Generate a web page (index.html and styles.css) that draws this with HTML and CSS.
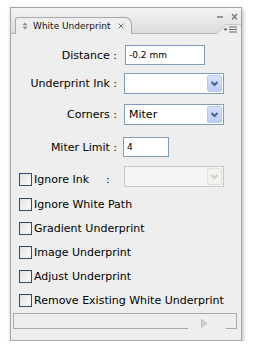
FILE: index.html
```html
<!DOCTYPE html>
<html>
<head>
<meta charset="utf-8">
<link rel="stylesheet" href="styles.css">
</head>
<body>
<div class="panel">
  <div class="header">
    <div class="tab">
      <svg class="grip" width="6" height="8" viewBox="0 0 6 8"><path d="M3 0.5 L5.5 3.2 L0.5 3.2 Z M3 7.5 L5.5 4.8 L0.5 4.8 Z" fill="#8a8a8a"/></svg>
      <span class="tab-title">White Underprint</span>
      <svg class="tab-close" width="6" height="6" viewBox="0 0 6 6"><path d="M0.5 0.5 L5.5 5.5 M5.5 0.5 L0.5 5.5" stroke="#6e6e6e" stroke-width="1"/></svg>
    </div>
    <svg class="win-ctrl" width="28" height="12" viewBox="0 0 28 12"><path d="M2 7 L8 7" stroke="#7a7a7a" stroke-width="1.5"/><path d="M17 4 L22 9.5 M22 4 L17 9.5" stroke="#7a7a7a" stroke-width="1.4"/></svg>
    <svg class="menu-tab" width="24" height="10" viewBox="0 0 24 10"><path d="M0 10 L0 9.5 L9 0.5 L24 0.5 L24 10 Z" fill="#eeeeee"/><path d="M0 9.5 L9 0.5 L24 0.5" fill="none" stroke="#c6c6c6" stroke-width="1"/><path d="M6.5 4.5 L10.5 4.5 L8.5 7 Z" fill="#555"/><path d="M12 3 L20 3 M12 5.5 L20 5.5 M12 8 L20 8" stroke="#666" stroke-width="1"/></svg>
  </div>
  <div class="body">
    <div class="form">
      <div class="row">
        <span class="label">Distance :</span>
        <div class="input distance">-0.2 mm</div>
      </div>
      <div class="row r2">
        <span class="label">Underprint Ink :</span>
        <div class="select">
          <span class="select-text"></span>
          <span class="arrow"><svg width="13" height="15" viewBox="0 0 13 15"><path d="M3.5 6 L6.5 9 L9.5 6" fill="none" stroke="#4d6185" stroke-width="2"/></svg></span>
        </div>
      </div>
      <div class="row r3">
        <span class="label">Corners :</span>
        <div class="select">
          <span class="select-text">Miter</span>
          <span class="arrow"><svg width="13" height="15" viewBox="0 0 13 15"><path d="M3.5 6 L6.5 9 L9.5 6" fill="none" stroke="#4d6185" stroke-width="2"/></svg></span>
        </div>
      </div>
      <div class="row r4">
        <span class="label">Miter Limit :</span>
        <div class="input miter">4</div>
      </div>
    </div>
    <div class="checks">
      <div class="check-row first">
        <span class="cb"></span><span class="cb-text">Ignore Ink</span><span class="colon">:</span>
        <div class="select disabled">
          <span class="select-text"></span>
          <span class="arrow"><svg width="13" height="15" viewBox="0 0 13 15"><path d="M3.5 6 L6.5 9 L9.5 6" fill="none" stroke="#cfcfc8" stroke-width="2"/></svg></span>
        </div>
      </div>
      <div class="check-row"><span class="cb"></span><span class="cb-text">Ignore White Path</span></div>
      <div class="check-row"><span class="cb"></span><span class="cb-text">Gradient Underprint</span></div>
      <div class="check-row"><span class="cb"></span><span class="cb-text">Image Underprint</span></div>
      <div class="check-row"><span class="cb"></span><span class="cb-text">Adjust Underprint</span></div>
      <div class="check-row"><span class="cb"></span><span class="cb-text">Remove Existing White Underprint</span></div>
    </div>
    <div class="status">
      <span class="status-gap"></span>
      <svg class="play" width="7" height="9" viewBox="0 0 7 9"><path d="M0.5 0.5 L6 4.5 L0.5 8.5 Z" fill="#d4d4d4" stroke="#bdbdbd" stroke-width="1"/></svg>
    </div>
  </div>
</div>
</body>
</html>
```

FILE: styles.css
```css
html, body {
  margin: 0;
  padding: 0;
  background: #ffffff;
}

body {
  font-family: "DejaVu Sans", Verdana, sans-serif;
  font-size: 11px;
  color: #000;
}

.panel {
  margin: 7px 0 0 10px;
  width: 230px;
  height: 332px;
  border: 1px solid #a6a6a6;
  background: #eeeeee;
  box-shadow: 1px 2px 4px rgba(0, 0, 0, 0.3);
  display: flex;
  flex-direction: column;
}

.header {
  position: relative;
  height: 25px;
  border-bottom: 1px solid #b4b4b4;
  background: linear-gradient(#f4f4f4, #dcdcdc);
  display: flex;
  align-items: flex-end;
  padding-left: 4px;
}

.tab {
  box-sizing: border-box;
  width: 117px;
  height: 17px;
  margin-bottom: -1px;
  background: #eeeeee;
  border: 1px solid #a9a9a9;
  border-bottom: none;
  border-radius: 3px 7px 0 0;
  display: flex;
  align-items: center;
  padding-left: 6px;
}

.grip {
  display: block;
  flex: none;
}

.tab-title {
  font-size: 9px;
  margin-left: 5px;
  color: #111;
  white-space: nowrap;
}

.tab-close {
  display: block;
  margin-left: 8px;
  flex: none;
}

.win-ctrl {
  position: absolute;
  left: 204px;
  top: 2px;
}

.menu-tab {
  position: absolute;
  left: 206px;
  bottom: -1px;
}

.body {
  flex: 1;
  display: flex;
  flex-direction: column;
}

.form {
  padding-top: 11px;
  display: flex;
  flex-direction: column;
}

.row {
  display: flex;
  align-items: center;
}

.r2 { margin-top: 8px; }
.r3 { margin-top: 10px; }
.r4 { margin-top: 12px; }

.label {
  width: 106px;
  text-align: right;
  white-space: nowrap;
}

.input {
  box-sizing: border-box;
  height: 20px;
  border: 1px solid #7f9db9;
  background: #fff;
  margin-left: 7px;
  display: flex;
  align-items: center;
  padding-left: 3px;
  font-size: 9px;
}

.distance {
  width: 80px;
  margin-left: 8px;
}

.miter {
  width: 46px;
  margin-left: 6px;
}

.select {
  box-sizing: border-box;
  width: 100px;
  height: 21px;
  margin-left: 7px;
  border: 1px solid #7f9db9;
  background: #fff;
  display: flex;
  align-items: center;
  padding: 1px;
}

.select-text {
  flex: 1;
  padding-left: 3px;
  font-size: 11px;
}

.arrow {
  box-sizing: border-box;
  width: 15px;
  height: 17px;
  border: 1px solid #b7c9f3;
  border-radius: 2px;
  background: linear-gradient(#d6e2fd, #b9cdf8);
  display: flex;
  align-items: center;
  justify-content: center;
}

.arrow svg {
  display: block;
}

.select.disabled {
  border-color: #c9c9c3;
  background: #f4f4f2;
  margin-left: 14px;
}

.select.disabled .arrow {
  border-color: #e2e2dd;
  background: #f2f2ef;
}

.checks {
  display: flex;
  flex-direction: column;
  padding-left: 8px;
}

.check-row {
  display: flex;
  align-items: center;
  margin-top: 11px;
}

.check-row.first {
  align-items: flex-end;
  margin-top: 9px;
}

.check-row.first .cb {
  margin-bottom: 1px;
}

.check-row.first .cb-text,
.check-row.first .colon {
  margin-bottom: 1px;
}

.cb {
  box-sizing: border-box;
  width: 13px;
  height: 13px;
  border: 1px solid #2a4f72;
  background: linear-gradient(135deg, #e2e2de, #fbfbfa);
  flex: none;
}

.cb-text {
  margin-left: 2px;
  white-space: nowrap;
  line-height: 13px;
}

.colon {
  margin-left: 17px;
  line-height: 13px;
}

.status {
  position: relative;
  box-sizing: border-box;
  height: 16px;
  margin: 6px 4px 0 2px;
  border: 1px solid #a9a9a9;
}

.status-gap {
  position: absolute;
  left: 174px;
  bottom: -1px;
  width: 38px;
  height: 1px;
  background: #eeeeee;
}

.play {
  position: absolute;
  left: 187px;
  top: 5px;
}
```
